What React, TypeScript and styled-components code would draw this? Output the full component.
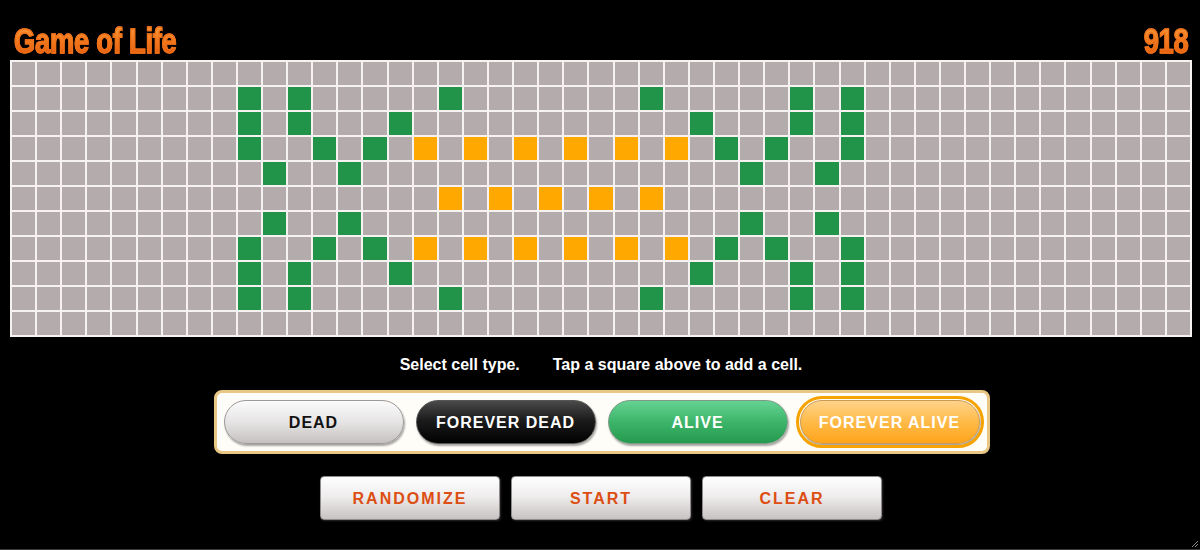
import React from "react";
import styled, { createGlobalStyle } from "styled-components";

const GlobalStyle = createGlobalStyle`
  html, body { margin: 0; padding: 0; background: #000; }
  body { font-family: "Liberation Sans", Arial, sans-serif; }
  * { box-sizing: border-box; }
`;

const Page = styled.div`
  position: relative;
  width: 1200px;
  height: 550px;
  background: #000;
  border-bottom: 1px solid #3a3a3a;
  overflow: hidden;
`;

const Header = styled.header`
  height: 60px;
  display: flex;
  justify-content: space-between;
  align-items: flex-end;
  padding: 0 12px 2px 14px;
`;

const Title = styled.h1<{ $sx: number; $origin: string }>`
  margin: 0;
  font-family: "Liberation Sans Narrow", "Liberation Sans", sans-serif;
  font-weight: 700;
  font-size: 35px;
  line-height: 1;
  letter-spacing: -0.3px;
  background: linear-gradient(180deg, #fb9e40 0%, #f27a1e 50%, #e2590c 100%);
  -webkit-background-clip: text;
  background-clip: text;
  color: transparent;
  -webkit-text-stroke: 1.3px #ef7018;
  transform: scaleX(${(p) => p.$sx});
  transform-origin: ${(p) => p.$origin};
`;

const GridWrap = styled.div`
  padding: 0 8px 0 10px;
`;

const Board = styled.div`
  width: 1182px;
  display: grid;
  grid-template-columns: repeat(47, 1fr);
  grid-auto-rows: 23px;
  gap: 2px;
  padding: 2px;
  background: #f7f2f2;
`;

type CellKind = "dead" | "alive" | "forever";

const cellColor: Record<CellKind, string> = {
  dead: "#b4acac",
  alive: "#22944a",
  forever: "#ffa800",
};

const Cell = styled.div<{ $kind: CellKind }>`
  background: ${(p) => cellColor[p.$kind]};
`;

const Message = styled.p`
  margin: 18px 0 16px;
  display: flex;
  justify-content: center;
  gap: 33px;
  color: #fff;
  font-family: "Liberation Sans", Arial, sans-serif;
  font-weight: 700;
  font-size: 16px;
  line-height: 19px;
  padding-left: 2px;
`;

const PanelRow = styled.div`
  display: flex;
  justify-content: center;
  padding-left: 3px;
`;

const Panel = styled.div`
  display: flex;
  gap: 12px;
  padding: 7px;
  border: 3px solid #e8c685;
  border-radius: 8px;
  background: #fffdf7;
`;

type Variant = "dead" | "fdead" | "alive" | "falive";

const variantStyles: Record<Variant, { bg: string; color: string; border: string }> = {
  dead: {
    bg: "linear-gradient(180deg, #fbfbfb 0%, #e6e4e4 50%, #c6c1c1 100%)",
    color: "#111",
    border: "#9d9999",
  },
  fdead: {
    bg: "linear-gradient(180deg, #4a4a4a 0%, #1c1c1c 45%, #000 100%)",
    color: "#fff",
    border: "#555",
  },
  alive: {
    bg: "linear-gradient(180deg, #66d292 0%, #3cb56a 50%, #259a4e 100%)",
    color: "#fff",
    border: "#7d9a88",
  },
  falive: {
    bg: "linear-gradient(180deg, #ffd389 0%, #ffba48 50%, #ffa41a 100%)",
    color: "#fff",
    border: "#c99a55",
  },
};

const TypeButton = styled.button<{ $variant: Variant; $selected?: boolean }>`
  width: 180px;
  height: 44px;
  border-radius: 22px;
  border: 1px solid ${(p) => variantStyles[p.$variant].border};
  background: ${(p) => variantStyles[p.$variant].bg};
  color: ${(p) => variantStyles[p.$variant].color};
  font-family: "Liberation Sans", Arial, sans-serif;
  font-weight: 700;
  font-size: 16px;
  letter-spacing: 1px;
  box-shadow: 1px 2px 2px rgba(0, 0, 0, 0.35);
  outline: ${(p) => (p.$selected ? "3px solid #f6a300" : "none")};
  outline-offset: 1px;
  padding: 2px 0 0;
  cursor: pointer;
`;

const ActionRow = styled.div`
  display: flex;
  justify-content: center;
  gap: 11px;
  margin-top: 22px;
  padding-left: 2px;
`;

const ActionButton = styled.button`
  width: 180px;
  height: 44px;
  border-radius: 4px;
  border: 1px solid #8f8b8b;
  background: linear-gradient(180deg, #ffffff 0%, #efeded 45%, #c8c3c3 100%);
  color: #dc4e12;
  font-family: "Liberation Sans", Arial, sans-serif;
  font-weight: 700;
  font-size: 16px;
  letter-spacing: 2px;
  box-shadow: 1px 1px 2px rgba(255, 255, 255, 0.15);
  padding: 1px 0 0;
  cursor: pointer;
`;

const Resizer = styled.svg`
  position: absolute;
  right: 1px;
  bottom: 1px;
`;

const greenRows: Record<number, number[]> = {
  1: [9, 11, 17, 25, 31, 33],
  2: [9, 11, 15, 27, 31, 33],
  3: [9, 12, 14, 28, 30, 33],
  4: [10, 13, 29, 32],
  6: [10, 13, 29, 32],
  7: [9, 12, 14, 28, 30, 33],
  8: [9, 11, 15, 27, 31, 33],
  9: [9, 11, 17, 25, 31, 33],
};
const orangeRows: Record<number, number[]> = {
  3: [16, 18, 20, 22, 24, 26],
  5: [17, 19, 21, 23, 25],
  7: [16, 18, 20, 22, 24, 26],
};

const ROWS = 11;
const COLS = 47;

function kindAt(r: number, c: number): CellKind {
  if (greenRows[r]?.includes(c)) return "alive";
  if (orangeRows[r]?.includes(c)) return "forever";
  return "dead";
}

export default function App() {
  const cells: React.ReactNode[] = [];
  for (let r = 0; r < ROWS; r++) {
    for (let c = 0; c < COLS; c++) {
      cells.push(<Cell key={`${r}-${c}`} $kind={kindAt(r, c)} />);
    }
  }
  return (
    <>
      <GlobalStyle />
      <Page>
        <Header>
          <Title $sx={0.78} $origin="left bottom">Game of Life</Title>
          <Title $sx={0.78} $origin="right bottom">918</Title>
        </Header>
        <GridWrap>
          <Board>{cells}</Board>
        </GridWrap>
        <Message>
          <span>Select cell type.</span>
          <span>Tap a square above to add a cell.</span>
        </Message>
        <PanelRow>
          <Panel>
            <TypeButton $variant="dead">DEAD</TypeButton>
            <TypeButton $variant="fdead">FOREVER DEAD</TypeButton>
            <TypeButton $variant="alive">ALIVE</TypeButton>
            <TypeButton $variant="falive" $selected>
              FOREVER ALIVE
            </TypeButton>
          </Panel>
        </PanelRow>
        <ActionRow>
          <ActionButton>RANDOMIZE</ActionButton>
          <ActionButton>START</ActionButton>
          <ActionButton>CLEAR</ActionButton>
        </ActionRow>
        <Resizer width="8" height="8" viewBox="0 0 8 8">
          <path d="M7 1 L1 7 M7 4 L4 7" stroke="#8a8a8a" strokeWidth="1" />
        </Resizer>
      </Page>
    </>
  );
}
